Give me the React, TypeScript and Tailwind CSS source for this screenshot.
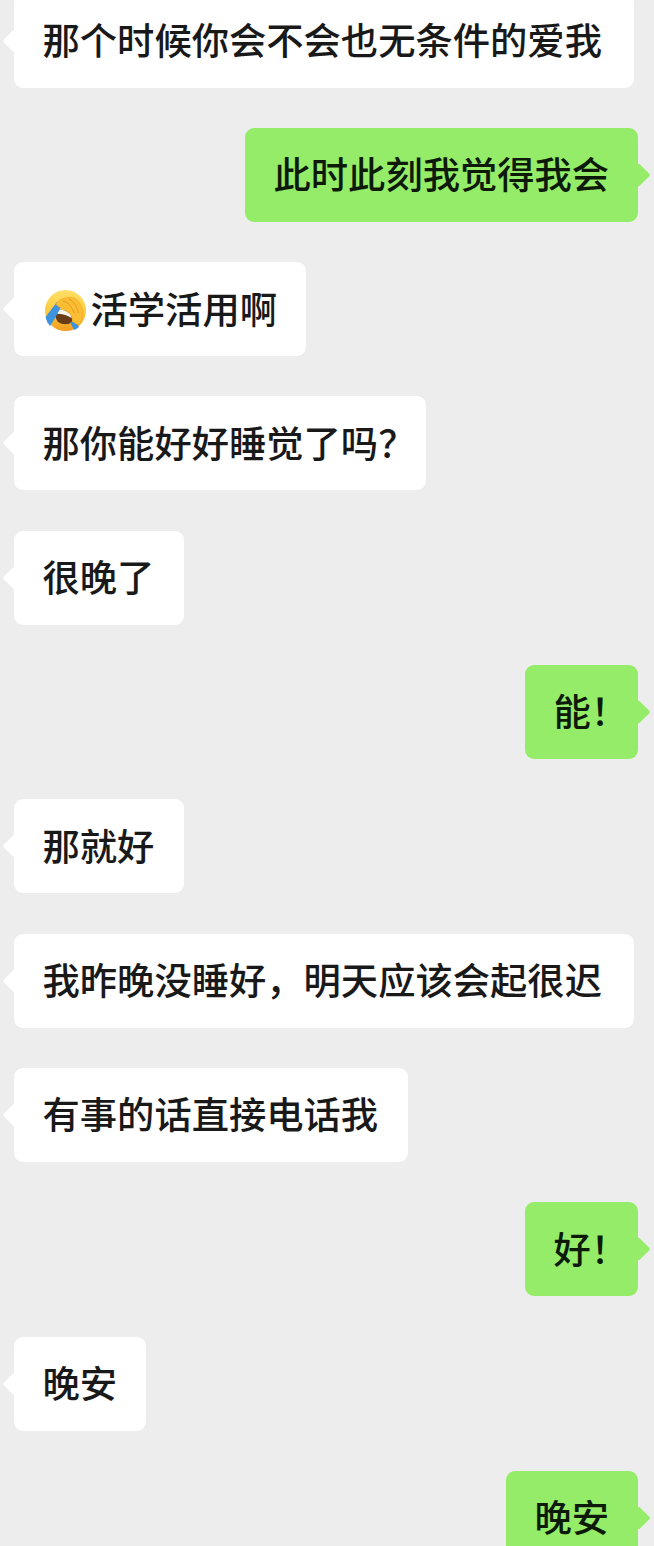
import React from "react";

function Facepalm() {
  return (
    <svg width="43" height="43" viewBox="0 0 43 43" className="shrink-0 mr-[5px] mt-[5px]">
      <defs>
        <linearGradient id="f" x1="0" y1="0" x2="0" y2="1">
          <stop offset="0%" stopColor="#ffe067" />
          <stop offset="55%" stopColor="#fcc93c" />
          <stop offset="100%" stopColor="#f39c20" />
        </linearGradient>
      </defs>
      <circle cx="21.5" cy="21.5" r="20.5" fill="url(#f)" />
      <path d="M11 20 Q20 19 27 26 Q29 31 27 34 Q20 37 14 33 Q10 28 11 20 Z" fill="#6a3d18" />
      <path d="M11 20 Q20 19 27 26 L27.5 29 Q19 24 10.5 25 Z" fill="#fbf6ee" />
      <path d="M13 13 L1.5 28 Q2.5 33 6 37 L10 31 L17 18 Z" fill="#3e93e0" />
      <path d="M26 33 L30 41 Q33 40 35 38 L32 33 Z" fill="#3e93e0" />
      <path
        d="M12 15 Q15 10 21 9 Q28 7 32 10 Q38 15 38.5 23 Q38.5 31 36 35 Q32 36 29.5 33 Q28 27 25 23 Q21 19 15 18 Q13 17 12 15 Z"
        fill="#fbbd33"
        stroke="#eca826"
        strokeWidth="0.6"
      />
      <path d="M19 12 Q27 14 30 24 M25 10 Q32 13 34.5 24" stroke="#dc9619" strokeWidth="0.8" fill="none" />
    </svg>
  );
}

type B = { t: string; me?: boolean; w: number; emoji?: boolean };

const items: B[] = [
  { t: "那个时候你会不会也无条件的爱我", w: 620 },
  { t: "此时此刻我觉得我会", me: true, w: 393 },
  { t: "活学活用啊", w: 292, emoji: true },
  { t: "那你能好好睡觉了吗？", w: 412 },
  { t: "很晚了", w: 170 },
  { t: "能！", me: true, w: 113 },
  { t: "那就好", w: 170 },
  { t: "我昨晚没睡好，明天应该会起很迟", w: 620 },
  { t: "有事的话直接电话我", w: 394 },
  { t: "好！", me: true, w: 113 },
  { t: "晚安", w: 132 },
  { t: "晚安", me: true, w: 132 },
];

function Bubble({ t, me, w, emoji }: B) {
  return (
    <div
      className={`relative flex h-[94px] shrink-0 items-center rounded-[9px] pb-[2px] whitespace-nowrap ${
        emoji ? "pl-[30px]" : "pl-[28.5px]"
      } ${
        me ? "self-end mr-[16px] bg-[#95ec69] text-[#0c1a07]" : "self-start ml-[14px] bg-white text-[#191919]"
      }`}
      style={{ width: w }}
    >
      <span
        className={`absolute top-1/2 h-[17px] w-[17px] -translate-y-1/2 rotate-45 rounded-[2px] ${
          me ? "right-[-8.5px] bg-[#95ec69]" : "left-[-8.5px] bg-white"
        }`}
      />
      {emoji && <Facepalm />}
      <span className={`relative text-[37.3px] font-medium leading-none ${emoji ? "-ml-[1.5px]" : ""}`}>{t}</span>
    </div>
  );
}

export default function App() {
  return (
    <div
      className="h-[1546px] w-[654px] overflow-hidden bg-[#ededed]"
      style={{ fontFamily: '"Noto Sans CJK SC", "Noto Sans", sans-serif' }}
    >
      <div className="-mt-[6.45px] flex flex-col gap-[40.3px]">
        {items.map((b, i) => (
          <Bubble key={i} {...b} />
        ))}
      </div>
    </div>
  );
}
